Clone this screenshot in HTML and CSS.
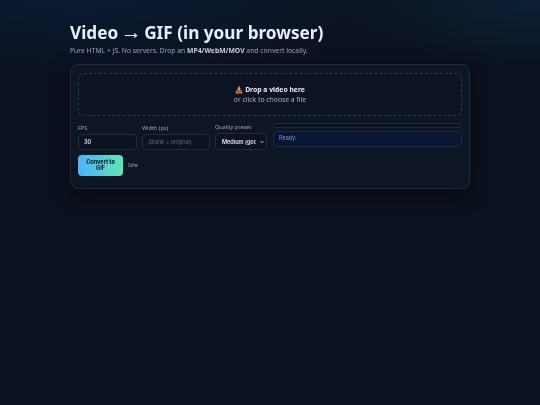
FILE: index.html
```html
<!DOCTYPE html>
<html lang="en">
<head>
    <meta charset="UTF-8">
    <meta name="viewport" content="width=device-width, initial-scale=1.0">
    <title>Video to GIF</title>
    <link rel="stylesheet" href="styles.css">
</head>
<body>
    <main class="wrap">
        <h1>Video <span class="arrow">→</span> GIF (in your browser)</h1>
        <p class="sub">Pure HTML + JS. No servers. Drop an <b>MP4/WebM/MOV</b> and convert locally.</p>

        <section class="card">
            <div class="drop">
                <div class="drop-title">
                    <svg class="drop-icon" viewBox="0 0 16 16" aria-hidden="true">
                        <path d="M2.500 8 1 15h14l-1.500-7z" fill="#d9743f"/>
                        <path d="M4 8.500h8l1 3H3z" fill="#7a3f2a"/>
                        <path d="M6.500 1h3v4H12l-4 5-4-5h2.500z" fill="#e8a06a"/>
                    </svg>
                    <b>Drop a video here</b>
                </div>
                <div>or click to choose a file</div>
            </div>

            <div class="controls">
                <div class="field field-fps">
                    <label for="fps">FPS</label>
                    <input id="fps" type="text" value="30">
                </div>
                <div class="field field-width">
                    <label for="width">Width (px)</label>
                    <input id="width" type="text" placeholder="(blank = original)">
                </div>
                <div class="field field-quality">
                    <label for="quality">Quality preset</label>
                    <select id="quality">
                        <option>Medium (good)</option>
                    </select>
                </div>
                <div class="field field-output">
                    <div class="progress"></div>
                    <div class="log">Ready.</div>
                </div>
            </div>

            <div class="actions">
                <button class="convert">Convert to GIF</button>
                <span class="state">Idle</span>
            </div>
        </section>
    </main>
</body>
</html>
```

FILE: styles.css
```css
* {
    box-sizing: border-box;
}

html, body {
    height: 100%;
}

body {
    margin: 0;
    font-family: "Noto Sans", sans-serif;
    color: #e6edf7;
    background-color: #0b111e;
    background-image:
        radial-gradient(200px 70px at 100% 0, #0b2236, transparent),
        radial-gradient(360px 80px at 15% 0, #0a1a32, transparent);
    background-repeat: no-repeat;
}

.wrap {
    width: 400px;
    margin-left: 70px;
    padding-top: 21.500px;
    filter: blur(0.45px);
}

h1 {
    margin: 0;
    font-size: 17.200px;
    line-height: 22px;
    font-weight: 700;
    color: #e8eefa;
}

.arrow {
    margin: 0 -2px;
    font-family: "Liberation Sans", sans-serif;
    font-size: 21px;
    font-weight: 400;
    line-height: 0;
}

.sub {
    margin: 1px 0 0;
    font-size: 6.800px;
    line-height: 12px;
    color: #94a2b8;
}

.sub b {
    color: #c2cde0;
}

.card {
    margin-top: 7.500px;
    height: 125px;
    padding: 8px 7px;
    background-color: #0f1623;
    border: 1px solid #1d2a3c;
    border-radius: 8px;
    box-shadow: 0 6px 20px rgba(0, 0, 0, 0.35);
}

.drop {
    height: 43px;
    padding-top: 11px;
    border: 1px dashed #2a374c;
    border-radius: 6px;
    background-color: #0c1424;
    text-align: center;
    font-size: 6.800px;
    line-height: 9.500px;
    color: #a3b0c5;
}

.drop-title {
    display: flex;
    justify-content: center;
    align-items: center;
    gap: 2px;
    color: #e6edf7;
}

.drop-icon {
    width: 8px;
    height: 8px;
}

.controls {
    display: flex;
    gap: 5px;
    margin-top: 7px;
}

.field {
    display: flex;
    flex-direction: column;
    justify-content: flex-end;
    height: 27px;
    flex: none;
}

.field label {
    margin-bottom: 2px;
    font-size: 5.500px;
    line-height: 8px;
    color: #94a2b8;
}

.field-fps {
    width: 59px;
}

.field-width {
    width: 68px;
}

.field-quality {
    width: 52px;
}

.field-output {
    flex: 1;
    margin-left: 1px;
    justify-content: flex-start;
}

input, select {
    width: 100%;
    height: 16px;
    padding: 0 5px;
    font-family: "Inter", sans-serif;
    font-size: 5.500px;
    color: #dfe7f3;
    background-color: #0b1220;
    border: 1px solid #1f2c40;
    border-radius: 4px;
    outline: none;
}

input {
    font-weight: 600;
}

input::placeholder {
    color: #5f6b7e;
    font-weight: 400;
}

select {
    height: 17px;
    padding: 0 10px 0 6px;
    font-weight: 600;
    appearance: none;
    background-image: url("data:image/svg+xml,%3Csvg xmlns='http://www.w3.org/2000/svg' viewBox='0 0 8 8'%3E%3Cpath d='M1 2.500l3 3 3-3' fill='none' stroke='%23dfe7f3' stroke-width='1.600'/%3E%3C/svg%3E");
    background-size: 4px 4px;
    background-position: right 2px center;
    background-repeat: no-repeat;
}

.progress {
    height: 4.500px;
    border: 1px solid #1f2c40;
    border-radius: 3px;
    background-color: #0b1220;
}

.log {
    height: 15.500px;
    margin-top: 3.500px;
    padding: 2px 5px;
    font-family: "Inter", sans-serif;
    font-size: 5.500px;
    line-height: 8px;
    color: #8494c8;
    background-color: #0a1433;
    border: 1px solid #1b2a4a;
    border-radius: 5px;
}

.actions {
    display: flex;
    align-items: center;
    gap: 5px;
    margin-top: 4.500px;
}

.convert {
    width: 45px;
    height: 21.500px;
    padding: 0 4px;
    font-family: "Inter", sans-serif;
    font-size: 5.500px;
    font-weight: 800;
    line-height: 6.500px;
    color: #07222f;
    background: linear-gradient(90deg, #4ab4fb, #5fe6b4);
    border: none;
    border-radius: 4px;
}

.state {
    font-size: 5.500px;
    color: #94a2b8;
}
```
